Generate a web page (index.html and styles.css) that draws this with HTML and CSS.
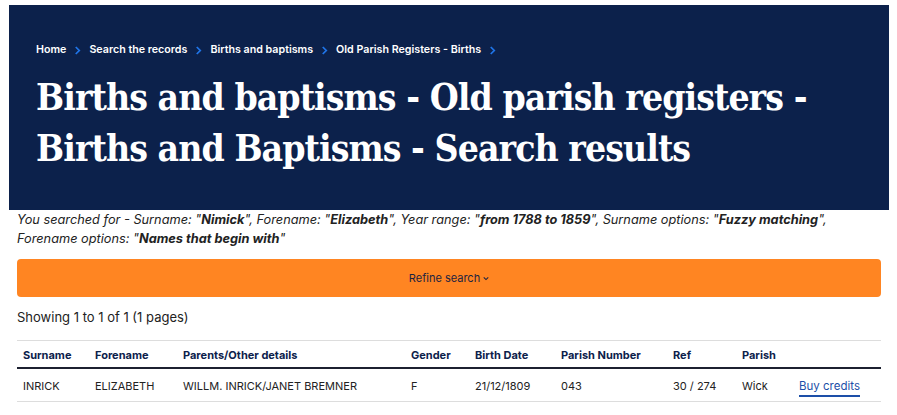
FILE: index.html
```html
<!DOCTYPE html>
<html lang="en">
<head>
<meta charset="utf-8">
<title>Search results</title>
<link rel="stylesheet" href="styles.css">
</head>
<body>
<header class="hero">
  <nav class="crumbs">
    <a href="#">Home</a><span class="chev"><svg viewBox="0 0 8 10" width="7" height="9"><path d="M2 1l4 4-4 4" fill="none" stroke="#1f74e8" stroke-width="2"/></svg></span>
    <a href="#">Search the records</a><span class="chev"><svg viewBox="0 0 8 10" width="7" height="9"><path d="M2 1l4 4-4 4" fill="none" stroke="#1f74e8" stroke-width="2"/></svg></span>
    <a href="#">Births and baptisms</a><span class="chev"><svg viewBox="0 0 8 10" width="7" height="9"><path d="M2 1l4 4-4 4" fill="none" stroke="#1f74e8" stroke-width="2"/></svg></span>
    <a href="#">Old Parish Registers - Births</a><span class="chev"><svg viewBox="0 0 8 10" width="7" height="9"><path d="M2 1l4 4-4 4" fill="none" stroke="#1f74e8" stroke-width="2"/></svg></span>
  </nav>
  <h1 class="title">Births and baptisms - Old parish registers - Births and Baptisms - Search results</h1>
</header>
<main class="content">
  <p class="searched">You searched for - Surname: "<b>Nimick</b>", Forename: "<b>Elizabeth</b>", Year range: "<b>from 1788 to 1859</b>", Surname options: "<b>Fuzzy matching</b>", Forename options: "<b>Names that begin with</b>"</p>
  <button class="refine">Refine search<svg class="caret" viewBox="0 0 8 6" width="6" height="5"><path d="M1 1.5l3 3 3-3" fill="none" stroke="#1c2340" stroke-width="1.4"/></svg></button>
  <p class="showing">Showing 1 to 1 of 1 (1 pages)</p>
  <table class="results">
    <colgroup>
      <col class="c1"><col class="c2"><col class="c3"><col class="c4"><col class="c5"><col class="c6"><col class="c7"><col class="c8"><col class="c9">
    </colgroup>
    <thead>
      <tr><th>Surname</th><th>Forename</th><th>Parents/Other details</th><th>Gender</th><th>Birth Date</th><th>Parish Number</th><th>Ref</th><th>Parish</th><th></th></tr>
    </thead>
    <tbody>
      <tr><td>INRICK</td><td>ELIZABETH</td><td>WILLM. INRICK/JANET BREMNER</td><td>F</td><td>21/12/1809</td><td>043</td><td>30 / 274</td><td>Wick</td><td><a class="buy" href="#">Buy credits</a></td></tr>
    </tbody>
  </table>
</main>
</body>
</html>
```
FILE: styles.css
```css
html, body { margin: 0; padding: 0; background: #fff; }
body { font-family: Inter, "Noto Sans", "Liberation Sans", sans-serif; color: #222; }
.hero {
  box-sizing: border-box;
  background: #0c214b;
  margin: 5px 8px 0 9px;
  padding: 38px 27px 0;
  height: 205px;
  overflow: hidden;
}
.crumbs { display: flex; align-items: center; font-size: 10.7px; font-weight: 600; line-height: 14px; }
.crumbs a { color: #fff; text-decoration: none; }
.chev { display: inline-flex; margin: 0 8px 0 8px; }
.title {
  margin: 15px 0 0;
  color: #fff;
  font-family: "DejaVu Serif Condensed", "DejaVu Serif", "Liberation Serif", serif;
  font-stretch: condensed;
  font-weight: bold;
  font-size: 37px;
  line-height: 51px;
  letter-spacing: -0.95px;
  max-width: 810px;
}
.content { padding: 0 16px 0 17px; }
.searched { margin: 0; font-style: italic; font-size: 12.75px; line-height: 19px; color: #222; }
.searched b { font-weight: 700; }
.refine {
  display: flex; align-items: center; justify-content: center; gap: 3px;
  width: 100%; height: 38px; margin: 11px 0 0;
  background: #ff8522; border: 0; border-radius: 4px;
  font-family: inherit; font-size: 11px; color: #1c2340;
}
.showing { margin: 11px 0 0; font-size: 13px; line-height: 18px; color: #222; }
.results { width: 100%; margin-top: 14px; border-collapse: collapse; table-layout: fixed; font-size: 11px; }
.results thead tr { border-top: 1px solid #ddd; border-bottom: 2px solid #1c2030; }
.results tbody tr { border-bottom: 1px solid #ddd; }
.results th { text-align: left; font-weight: 700; color: #0c214b; padding: 6px 6px 5px; height: 15px; }
.results td { padding: 9px 6px 8px; height: 15px; color: #222; }
.c1 { width: 72px; } .c2 { width: 88px; } .c3 { width: 228px; } .c4 { width: 64px; }
.c5 { width: 86px; } .c6 { width: 112px; } .c7 { width: 69px; } .c8 { width: 57px; }
.buy { color: #1d4fa8; text-decoration: none; border-bottom: 2px solid #1d4fa8; padding-bottom: 2px; font-size: 11.5px; }
```
